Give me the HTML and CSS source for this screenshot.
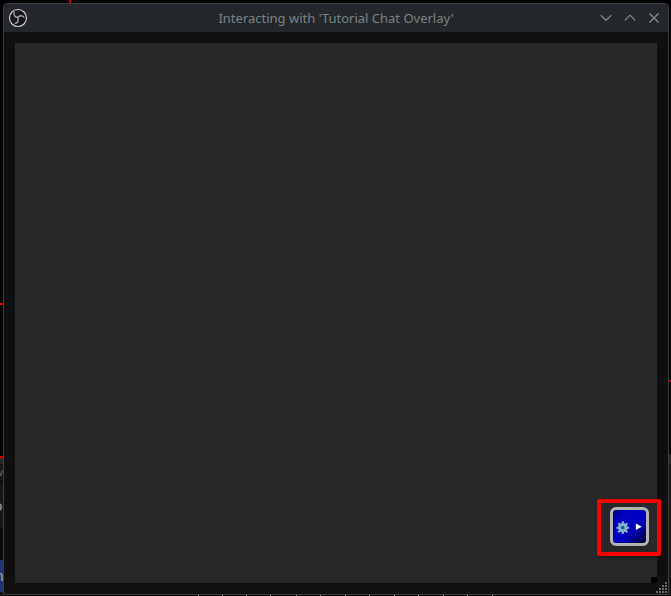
FILE: index.html
```html
<!DOCTYPE html>
<html lang="en">
<head>
<meta charset="utf-8">
<title>Interacting with 'Tutorial Chat Overlay'</title>
<link rel="stylesheet" href="styles.css">
</head>
<body>
<div class="desktop">
  <svg class="backdrop" width="671" height="596" aria-hidden="true">
    <path fill="#16171a" d="M0 458h3v138H0zM669 464h2v132h-2z"/>
    <path fill="#292a2d" d="M0 458h3v6H0zM669 454h2v10h-2z"/>
    <path fill="#0b0c0d" d="M0 480h3v3H0zM0 528h3v32H0z"/>
    <path fill="#25346b" d="M0 560h3v32H0z"/>
    <path fill="#d90000" d="M69 0h2v3h-2zM0 303h3v2H0zM0 456h3v2H0zM669 380h2v2h-2z"/>
    <path fill="#b9b9b9" d="M198 595h1v1h-1zM222 595h1v1h-1zM246 595h1v1h-1zM270 595h1v1h-1zM296 595h1v1h-1zM320 595h1v1h-1zM345 595h1v1h-1zM369 595h1v1h-1zM394 595h1v1h-1zM418 595h1v1h-1zM443 595h1v1h-1zM467 595h1v1h-1zM492 595h1v1h-1z"/>
    <text class="behind small" x="-5" y="476">w</text>
    <text class="behind" x="-6" y="511">o</text>
    <text class="behind" x="-5" y="581">n</text>
  </svg>
  <main class="window">
    <header class="titlebar">
      <svg class="app-icon" viewBox="0 0 20 20" width="20" height="20">
        <circle cx="10" cy="10" r="8.5" fill="#17161a" stroke="#d5d5d5" stroke-width="1.1"/>
        <g fill="none" stroke="#a5a5a5" stroke-width="1.4" stroke-linecap="round">
          <path d="M9.7 9.5C6.7 9 5.3 7 6.2 4.5"/>
          <path d="M9.7 9.5C11.5 7.2 14.3 7.1 15.9 9.2"/>
          <path d="M9.7 9.5C11 12.2 10 14.7 7.5 15.4"/>
        </g>
      </svg>
      <h1 class="title">Interacting with 'Tutorial Chat Overlay'</h1>
      <div class="controls">
        <svg viewBox="0 0 12 12" width="12" height="12"><path d="M.8 3.2 6 8.4l5.2-5.2"/></svg>
        <svg viewBox="0 0 12 12" width="12" height="12"><path d="M.8 8.4 6 3.2l5.2 5.2"/></svg>
        <svg viewBox="0 0 12 12" width="12" height="12"><path d="m1.5 1.5 9 9m0-9-9 9"/></svg>
      </div>
    </header>
    <section class="client">
      <div class="view">
        <div class="highlight">
          <button class="settings" aria-label="Open settings">
            <svg viewBox="0 0 33 33" width="33" height="33">
              <g transform="translate(9.8 17.7)">
                <circle r="3.2" fill="none" stroke="#83b5c8" stroke-width="3.2"/>
                <path fill="none" stroke="#83b5c8" stroke-width="2.1" d="M0-6.4v2.6M0 3.8v2.6M-6.4 0h2.6M3.8 0h2.6M-4.5-4.5l1.8 1.8M2.7 2.7l1.8 1.8M4.5-4.5 2.7-2.7M-2.7 2.7l-1.8 1.8"/>
                <circle r="1.5" fill="#315c91"/>
              </g>
              <path fill="#fff" d="m22.8 13.5 6 3.2-6 3.2z"/>
            </svg>
          </button>
        </div>
        <span class="corner"></span>
      </div>
      <svg class="grip" width="12" height="12"><path fill="#6b6b6b" d="M9 0h2v2H9zM6 3h2v2H6zM9 3h2v2H9zM3 6h2v2H3zM6 6h2v2H6zM9 6h2v2H9zM0 9h2v2H0zM3 9h2v2H3zM6 9h2v2H6zM9 9h2v2H9z"/></svg>
    </section>
  </main>
</div>
</body>
</html>
```
FILE: styles.css
```css
* { box-sizing: border-box; }
body {
  margin: 0;
  background: #000;
  font-family: "Noto Sans", sans-serif;
}
.desktop {
  position: relative;
  width: 671px;
  height: 596px;
  padding: 3px 2px 1px 3px;
  overflow: hidden;
}
.backdrop {
  position: absolute;
  inset: 0;
}
.behind {
  fill: #a5a5a5;
  font-size: 14px;
}
.small {
  fill: #666;
  font-size: 10px;
}
.window {
  position: relative;
  display: flex;
  flex-direction: column;
  height: 592px;
  border: 1px solid #3b3e42;
  border-radius: 4px 4px 0 0;
  background: #101010;
  overflow: hidden;
}
.titlebar {
  display: grid;
  grid-template-columns: 72px 1fr 72px;
  align-items: center;
  height: 28px;
  background: #24282d;
}
.app-icon {
  margin-left: 4px;
}
.title {
  margin: 0;
  color: #798384;
  font-size: 13px;
  font-weight: 400;
  line-height: 28px;
  text-align: center;
  white-space: nowrap;
}
.controls {
  display: flex;
  justify-content: flex-end;
  gap: 12px;
  padding-right: 8px;
}
.controls svg {
  fill: none;
  stroke: #899294;
  stroke-width: 1.1;
}
.client {
  position: relative;
  flex: 1;
  padding: 11px;
}
.view {
  position: relative;
  display: flex;
  align-items: flex-end;
  justify-content: flex-end;
  width: 642px;
  height: 540px;
  background: #28282a;
}
.highlight {
  display: flex;
  width: 64px;
  height: 57px;
  margin: 0 -4px 27px 0;
  padding: 4px 0 0 9px;
  border: 4px solid #fa0000;
  border-radius: 2px;
  box-shadow: 1px 1px 3px #0006;
}
.settings {
  width: 39px;
  height: 39px;
  padding: 0;
  border: 3px solid #b3b3b3;
  border-radius: 6px;
  background: linear-gradient(135deg, #000068 0%, #0000b8 18%, #0000c8 45%, #0000a8 68%, #000030 100%);
}
.settings svg {
  display: block;
}
.corner {
  position: absolute;
  right: 0;
  bottom: 0;
  width: 6px;
  height: 6px;
  background: #000;
}
.grip {
  position: absolute;
  right: 0;
  bottom: 0;
}
```
